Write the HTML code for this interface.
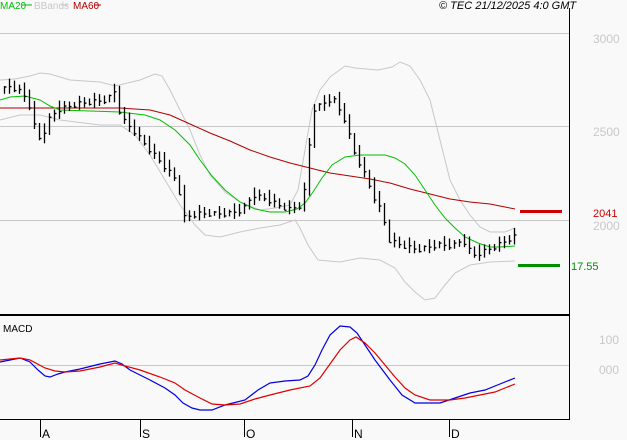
<!DOCTYPE html><html><head><meta charset="utf-8"><style>
html,body{margin:0;padding:0;background:#f9f9f9;width:627px;height:440px;overflow:hidden}
svg{display:block}
text{font-family:"Liberation Sans",sans-serif}
</style></head><body>
<svg width="627" height="440" xmlns="http://www.w3.org/2000/svg">
<rect width="627" height="440" fill="#f9f9f9"/>
<g stroke="#c8c8c8" stroke-width="1">
<line x1="0" y1="33.5" x2="569" y2="33.5"/>
<line x1="0" y1="126.5" x2="569" y2="126.5"/>
<line x1="0" y1="220.5" x2="569" y2="220.5"/>
<line x1="0" y1="365.5" x2="569" y2="365.5"/>
</g>
<line x1="569.5" y1="8" x2="569.5" y2="420" stroke="#000"/>
<line x1="0" y1="315" x2="570" y2="315" stroke="#000" stroke-width="2"/>
<line x1="0" y1="419.5" x2="570" y2="419.5" stroke="#000"/>
<g stroke="#000"><line x1="40.5" y1="419" x2="40.5" y2="437"/><line x1="140.5" y1="419" x2="140.5" y2="437"/><line x1="244.5" y1="419" x2="244.5" y2="437"/><line x1="352.5" y1="419" x2="352.5" y2="437"/><line x1="449.5" y1="419" x2="449.5" y2="437"/></g>
<g font-size="12" fill="#000"><text x="42" y="438">A</text><text x="142" y="438">S</text><text x="246" y="438">O</text><text x="354" y="438">N</text><text x="451" y="438">D</text></g>
<g fill="none" stroke="#c8c8c8" stroke-width="1">
<polyline points="0,80 15,79 30,76 40,73 50,74 70,80 100,82 115,86 140,80 155,74 162,76 170,90 180,110 190,130 200,155 210,175 225,192 240,202 260,210 275,208 290,205 298,190 305,150 312,110 320,90 330,77 345,66 355,68 378,70 392,67 400,62 410,66 420,80 430,100 440,140 450,180 460,200 470,215 480,227 490,232 505,232 515,228"/>
<polyline points="0,120 20,115 40,115 60,120 100,125 120,125 135,135 150,155 165,180 180,205 195,225 205,235 220,237 240,232 260,228 280,225 295,220 300,228 308,245 318,260 340,262 360,258 380,260 395,268 405,282 415,292 425,300 435,298 445,285 455,273 470,265 490,262 515,261"/>
</g>
<polyline fill="none" stroke="#b00000" stroke-width="1" points="0,108 30,108 60,108 120,108 150,110 170,115 190,124 210,133 230,141 250,150 270,157 290,163 310,168 330,173 350,176 370,179 390,183 410,189 430,194 450,199 470,202 490,204 505,207 515,209"/>
<polyline fill="none" stroke="#00c000" stroke-width="1" points="0,100 10,97 25,96 40,100 50,106 60,110 120,112 145,115 160,120 175,130 190,145 200,160 212,176 225,190 240,202 255,209 270,212 285,212 297,209 305,203 313,192 322,178 332,165 345,157 360,155 385,155 395,158 405,164 415,175 425,190 435,205 445,218 455,228 465,237 478,243 490,247 500,247 515,246"/>
<g id="bars" stroke="#000" stroke-width="1.3"></g>
<rect x="520" y="210" width="42" height="3" fill="#d00000"/>
<rect x="518" y="264" width="42" height="3" fill="#009000"/>
<text x="593" y="217" font-size="11" fill="#d00000">2041</text>
<text x="571" y="270" font-size="11" fill="#009000">17.55</text>
<g font-size="12" fill="#c8c8c8"><text x="593" y="43">3000</text><text x="593" y="136">2500</text><text x="593" y="230">2000</text><text x="599" y="344">100</text><text x="599" y="374">000</text></g>
<polyline fill="none" stroke="#0000e0" stroke-width="1.2" points="0,362 10,360 20,358 30,362 38,370 45,376 50,377 58,374 65,372 80,369 100,364 115,361 122,364 130,370 150,380 165,388 175,395 183,403 192,408 200,410 212,410 225,405 245,400 258,390 270,383 285,381 300,380 308,376 315,365 322,350 330,335 340,326 350,327 357,333 365,345 375,360 390,380 402,395 415,403 440,403 455,398 470,393 485,390 500,384 515,378"/>
<polyline fill="none" stroke="#e00000" stroke-width="1.2" points="0,360 20,358 30,360 45,368 55,371 65,372 80,371 100,367 115,363 125,366 140,370 160,377 175,383 185,390 200,398 212,404 225,405 240,404 255,399 270,395 290,390 310,386 320,378 330,364 340,350 350,340 356,337 365,343 375,353 385,365 395,377 405,388 415,395 430,400 450,400 465,398 480,395 495,392 505,388 515,384"/>
<text x="3" y="332" font-size="10" fill="#000">MACD</text>
<g font-size="10"><text x="0" y="9" fill="#00c000">MA20</text><line x1="22" y1="5" x2="32" y2="5" stroke="#00c000"/>
<text x="34" y="9" fill="#c8c8c8">BBands</text><line x1="61" y1="5" x2="68" y2="5" stroke="#c8c8c8"/>
<text x="73" y="9" fill="#b00000">MA60</text><line x1="94" y1="5" x2="101" y2="5" stroke="#b00000"/></g>
<text x="439" y="9" font-size="11" font-style="italic" fill="#000">© TEC 21/12/2025 4:0 GMT</text>
</svg>
<script>
var pts=[[3,92],[10,86],[20,90],[30,100],[40,140],[45,135],[52,118],[60,110],[80,104],[110,100],[116,90],[120,104],[123,118],[135,130],[150,148],[165,165],[180,182],[185,218],[200,214],[230,214],[245,210],[255,195],[270,200],[290,210],[305,205],[310,160],[315,110],[325,104],[335,98],[348,122],[355,150],[365,170],[375,195],[385,215],[390,240],[405,246],[420,250],[440,245],[455,246],[465,240],[475,256],[490,250],[505,243],[515,237]];
function py(x){if(x<=pts[0][0])return pts[0][1];for(var i=0;i<pts.length-1;i++){if(x>=pts[i][0]&&x<=pts[i+1][0]){var t=(x-pts[i][0])/(pts[i+1][0]-pts[i][0]);return pts[i][1]+t*(pts[i+1][1]-pts[i][1]);}}return pts[pts.length-1][1];}
var g=document.getElementById('bars'),s='';var k=0;
for(var x=4;x<=515;x+=5,k++){var a=py(x-2.5),b=py(x+2.5);var lo=Math.min(a,b),hi=Math.max(a,b);var e=3+((k*5)%7);
var y1=lo-e,y2=hi+e*0.6;var xx=Math.round(x)+0.5;var c=b+((k%3)-1)*2;
s+='<line x1="'+xx+'" y1="'+y1+'" x2="'+xx+'" y2="'+y2+'"/><line x1="'+xx+'" y1="'+c+'" x2="'+(xx+2)+'" y2="'+c+'"/>';}
g.innerHTML=s;
</script>
</body></html>
